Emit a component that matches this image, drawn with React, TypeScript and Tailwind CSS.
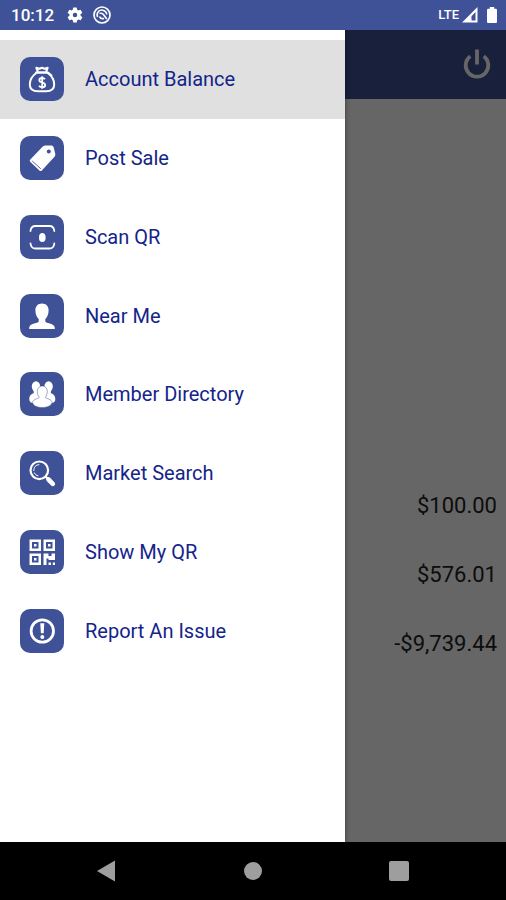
import React from "react";

const MoneyBagIcon: React.FC = () => (
  <svg viewBox="0 0 44 44" className="size-11" fill="none" stroke="white" strokeWidth="2" strokeLinejoin="round" aria-hidden="true">
    <path d="M17 15.5C12.500 18.500 9.800 23 9.800 27.500C9.800 32.300 13 34.300 18 34.300H26C31 34.300 34.200 32.300 34.200 27.500C34.200 23 31.500 18.500 27 15.500Z" />
    <path d="M18 15L16.300 10.800L19.500 11.800L22 10.800L24.500 11.800L27.700 10.800L26 15" />
    <path d="M16 15.500H28L31.500 18.500" strokeLinecap="round" />
    <path d="M25 22.300C24.300 21.300 23.300 21 22.200 21C20.500 21 19.300 21.900 19.300 23.200C19.300 26.300 25.200 24.700 25.200 27.900C25.200 29.300 23.900 30.200 22.200 30.200C20.800 30.200 19.700 29.700 19 28.700M22.200 19.300V31.800" strokeWidth="1.800" />
  </svg>
);

const TagIcon: React.FC = () => (
  <svg viewBox="0 0 44 44" className="size-11" aria-hidden="true">
    <path d="M10.300 23.500L22.500 10.800C23.500 9.800 24.500 9.400 26 9.400L31.500 9.500C32.500 9.600 33.300 10.200 33.600 11.200L35.200 17.500C35.500 18.900 35.200 20 34.300 21L21.800 34.500C21.100 35.300 20.200 35.300 19.400 34.600L10.400 26C9.600 25.200 9.600 24.300 10.300 23.500Z" fill="white" />
    <circle cx="28.800" cy="15.500" r="2" fill="#3f5197" />
    <path d="M12.200 25L20.800 32.800" stroke="#3f5197" strokeWidth="0.900" />
  </svg>
);

const ScanIcon: React.FC = () => (
  <svg viewBox="0 0 44 44" className="size-11" fill="none" stroke="white" strokeWidth="1.800" strokeLinecap="round" aria-hidden="true">
    <path d="M10.500 16C10.800 13 12.200 11 15.500 11H29.500C32.500 11 34 13 34.300 16" />
    <path d="M10.500 28.500C10.800 31.500 12.200 33.500 15.500 33.500H29.500C32.500 33.500 34 31.500 34.300 28.500" />
    <ellipse cx="22.300" cy="22.500" rx="3.300" ry="4.600" fill="white" stroke="none" />
  </svg>
);

const PersonIcon: React.FC = () => (
  <svg viewBox="0 0 44 44" className="size-11" fill="white" aria-hidden="true">
    <path d="M22 9.500C26.200 9.500 28.800 12.300 28.600 16.500C28.500 20.200 27.300 23.300 25.300 25.100V27.500C25.500 29 32.300 29.500 34 31.700C34.700 32.600 34.800 33.700 34.800 35H9.200C9.200 33.700 9.300 32.600 10 31.700C11.700 29.500 18.500 29 18.700 27.500V25.100C16.700 23.300 15.500 20.200 15.400 16.500C15.200 12.300 17.800 9.500 22 9.500Z" />
  </svg>
);

const GroupIcon: React.FC = () => (
  <svg viewBox="0 0 44 44" className="size-11" fill="white" aria-hidden="true">
    <ellipse cx="16" cy="14.500" rx="4.200" ry="5.200" />
    <ellipse cx="28.600" cy="14.500" rx="4.200" ry="5.200" />
    <path d="M13.500 17H20L22.300 24L18 31H12.500C10 30.500 9.300 29 9.300 27C9.300 23.500 11.500 22 13.800 21Z" />
    <path d="M31.100 17H24.600L22.300 24L26.600 31H32.100C34.600 30.500 35.300 29 35.300 27C35.300 23.500 33.100 22 30.800 21Z" />
    <path
      d="M22.300 14C25.500 14 27.400 16.500 27.300 19.600C27.200 22 26.400 24 25.300 25.300C26.500 27 32 27 32 30.500C32 33.500 27 35.500 22.300 35.500C17.600 35.500 12.600 33.500 12.600 30.500C12.600 27 18.100 27 19.300 25.300C18.200 24 17.400 22 17.300 19.600C17.200 16.500 19.100 14 22.300 14Z"
      stroke="#3f5197"
      strokeWidth="0.500"
    />
  </svg>
);

const MagnifierIcon: React.FC = () => (
  <svg viewBox="0 0 44 44" className="size-11" fill="none" stroke="white" aria-hidden="true">
    <circle cx="19.300" cy="19.300" r="8.800" strokeWidth="2.200" />
    <path d="M13.800 20C13.600 16 16 13.800 19.300 13.600M14.300 21.500C15 23.500 16.500 24.500 18.300 24.800" strokeWidth="1" />
    <path d="M25.500 25.500L28.500 28.500" strokeWidth="2.400" />
    <path d="M28.500 28.500L32.800 32.800" strokeWidth="4.600" strokeLinecap="round" />
  </svg>
);

const QrIcon: React.FC = () => (
  <svg viewBox="0 0 44 44" className="size-11" fill="white" aria-hidden="true">
    <path
      fillRule="evenodd"
      d="M9.500 9.500H21V21H9.500ZM12 12V18.500H18.500V12ZM23.500 9.500H35V21H23.500ZM26 12V18.500H32.500V12ZM9.500 23.500H21V35H9.500ZM12 26V32.500H18.500V26Z"
    />
    <path d="M14 14H16.500V16.500H14ZM28 14H30.500V16.500H28ZM14 28H16.500V30.500H14Z" />
    <path d="M23.500 23.500H28.500V26H31.500V23.500H35V30H28.500V28.500H26.500V35H23.500ZM28.500 32.500H31V35H28.500ZM32.800 32.500H35V35H32.800Z" />
  </svg>
);

const AlertIcon: React.FC = () => (
  <svg viewBox="0 0 44 44" className="size-11" fill="none" stroke="white" aria-hidden="true">
    <circle cx="22.300" cy="22" r="11.200" strokeWidth="2.800" />
    <path d="M20.300 14.200H24.300L23.700 24.300H20.900Z" fill="white" stroke="none" />
    <circle cx="22.300" cy="28" r="2" fill="white" stroke="none" />
  </svg>
);

const menuItems = [
  { label: "Account Balance", Icon: MoneyBagIcon, active: true },
  { label: "Post Sale", Icon: TagIcon },
  { label: "Scan QR", Icon: ScanIcon },
  { label: "Near Me", Icon: PersonIcon },
  { label: "Member Directory", Icon: GroupIcon },
  { label: "Market Search", Icon: MagnifierIcon },
  { label: "Show My QR", Icon: QrIcon },
  { label: "Report An Issue", Icon: AlertIcon },
];

const amounts = ["$100.00", "$576.01", "-$9,739.44"];

const StatusBar: React.FC = () => (
  <div className="flex h-[30px] shrink-0 items-center justify-between bg-[#3f5197] pr-2 pl-[11px] text-white">
    <div className="flex items-center">
      <span className="text-[17px] leading-5 font-medium">10:12</span>
      <svg viewBox="0 0 24 24" className="ml-3 size-[18px]" fill="white" aria-hidden="true">
        <path
          fillRule="evenodd"
          d="M19.400 13a7.500 7.500 0 0 0 0-2l2.100-1.700a.5.5 0 0 0 .1-.6l-2-3.500a.5.5 0 0 0-.6-.2l-2.500 1a7.300 7.300 0 0 0-1.700-1L14.400 2.400a.5.5 0 0 0-.5-.4h-4a.5.5 0 0 0-.5.4L9.100 5a7.700 7.700 0 0 0-1.700 1l-2.500-1a.5.5 0 0 0-.6.2l-2 3.500a.5.5 0 0 0 .1.6L4.600 11a7.900 7.900 0 0 0 0 2l-2.200 1.700a.5.5 0 0 0-.1.600l2 3.500c.1.200.4.300.6.200l2.500-1c.5.400 1.100.7 1.700 1l.4 2.600c0 .2.200.4.500.4h4c.3 0 .5-.2.5-.4l.4-2.600a7.300 7.300 0 0 0 1.700-1l2.500 1c.2.100.5 0 .6-.2l2-3.500a.5.5 0 0 0-.1-.6ZM12 15a3 3 0 1 1 0-6 3 3 0 0 1 0 6Z"
        />
      </svg>
      <svg viewBox="0 0 20 20" className="ml-2 size-5" fill="none" stroke="white" aria-hidden="true">
        <circle cx="10" cy="10" r="8" strokeWidth="1.700" />
        <path d="M5.600 12A5 5 0 0 1 6.500 6.400A5 5 0 0 1 14.800 9.500" strokeWidth="1.500" />
        <path d="M7.500 8.500C9.500 7.800 11 8.800 11.800 10L14.800 14M7.500 11.500C8.300 13.500 10 14 12 13.500" strokeWidth="1.700" />
      </svg>
    </div>
    <div className="flex items-center">
      <span className="text-[13px] leading-5 font-medium">LTE</span>
      <svg viewBox="0 0 16 16" className="ml-[3px] size-4" aria-hidden="true">
        <path fillRule="evenodd" d="M15.500 0V15.500H0ZM13.500 5L9.500 9.200V13.500H13.500Z" fill="white" />
      </svg>
      <svg viewBox="0 0 12 18" className="ml-2 h-[18px] w-3" fill="white" aria-hidden="true">
        <path d="M3.800 1H8.200V2.800H9.500C10.500 2.800 11 3.300 11 4.300V15.500C11 16.500 10.500 17 9.500 17H2.500C1.500 17 1 16.500 1 15.500V4.300C1 3.300 1.500 2.800 2.500 2.800H3.800Z" />
      </svg>
    </div>
  </div>
);

const AccountPage: React.FC = () => (
  <div className="flex flex-1 flex-col bg-white">
    <header className="flex h-[69px] items-center justify-end bg-[#3f5197] px-3">
      <button type="button" aria-label="Log out" className="size-[34px]">
        <svg viewBox="0 0 34 34" fill="none" stroke="white" strokeWidth="3.800" aria-hidden="true">
          <path d="M10.300 8.300A11.300 11.300 0 1 0 23.700 8.300" />
          <path d="M17 1.500V16.500" />
        </svg>
      </button>
    </header>
    <ul className="mt-[372px] px-[9px] text-right text-[22px] text-[#222]">
      {amounts.map((amount) => (
        <li key={amount} className="flex h-[69px] items-center justify-end">
          {amount}
        </li>
      ))}
    </ul>
  </div>
);

const Drawer: React.FC = () => (
  <nav className="absolute inset-y-0 left-0 w-[68.2%] bg-white pt-[10px] shadow-[1px_0_4px_rgba(0,0,0,0.3)]">
    <ul className="grid h-[630px] grid-rows-8">
      {menuItems.map(({ label, Icon, active }) => (
        <li key={label}>
          <a
            href="#"
            className={`flex h-full items-center gap-[21px] pl-5 text-xl text-[#14248a] ${active ? "bg-[#e0e0e0]" : ""}`}
          >
            <span className="rounded-[10px] bg-[#3f5197]">
              <Icon />
            </span>
            {label}
          </a>
        </li>
      ))}
    </ul>
  </nav>
);

const NavigationBar: React.FC = () => (
  <div className="flex h-[58px] shrink-0 items-center justify-center gap-[98px] bg-black">
    <button type="button" aria-label="Back" className="flex size-12 items-center justify-center">
      <svg viewBox="0 0 20 22" className="h-[22px] w-5" fill="#9e9e9e" aria-hidden="true">
        <path d="M18 0.500V21.500L0 11Z" />
      </svg>
    </button>
    <button type="button" aria-label="Home" className="flex size-12 items-center justify-center">
      <span className="size-[18px] rounded-full bg-[#9e9e9e]" />
    </button>
    <button type="button" aria-label="Recent apps" className="flex size-12 items-center justify-center">
      <span className="size-5 rounded-xs bg-[#9e9e9e]" />
    </button>
  </div>
);

const App: React.FC = () => {
  return (
    <div className="flex min-h-screen flex-col font-[Roboto,sans-serif]">
      <StatusBar />
      <main className="relative flex flex-1 flex-col overflow-hidden">
        <AccountPage />
        {/* Scrim behind the open drawer */}
        <div className="absolute inset-0 bg-black/60" />
        <Drawer />
      </main>
      <NavigationBar />
    </div>
  );
};

export default App;
